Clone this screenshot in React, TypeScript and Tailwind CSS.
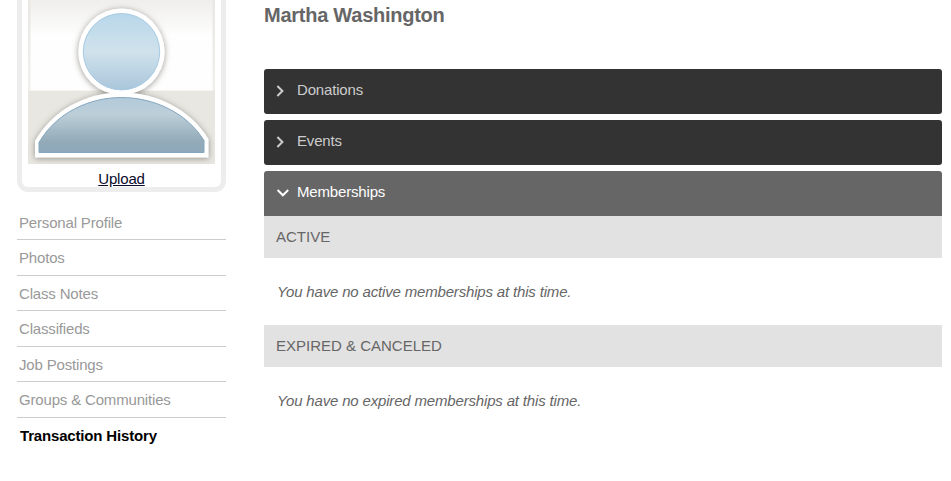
import { useState } from "react";
import clsx from "clsx";

const navItems = [
  "Personal Profile",
  "Photos",
  "Class Notes",
  "Classifieds",
  "Job Postings",
  "Groups & Communities",
  "Transaction History",
];

const sections = [
  { id: "donations", title: "Donations", groups: [] },
  { id: "events", title: "Events", groups: [] },
  {
    id: "memberships",
    title: "Memberships",
    groups: [
      { heading: "ACTIVE", message: "You have no active memberships at this time." },
      { heading: "EXPIRED & CANCELED", message: "You have no expired memberships at this time." },
    ],
  },
];

function Avatar() {
  return (
    <svg viewBox="22 0 199 170" className="block h-[170px] w-[199px]" aria-label="Profile photo">
      <defs>
        <linearGradient id="wall" x1="0" y1="0" x2="0" y2="1">
          <stop offset="0" stopColor="#efeeeb" />
          <stop offset="0.4" stopColor="#fefefe" />
          <stop offset="1" stopColor="#fefefe" />
        </linearGradient>
        <linearGradient id="edge" x1="0" y1="0" x2="0" y2="1">
          <stop offset="0" stopColor="#e8e7e2" />
          <stop offset="1" stopColor="#f1f0ed" />
        </linearGradient>
        <linearGradient id="head" x1="0" y1="0" x2="0" y2="1">
          <stop offset="0" stopColor="#b8d7ea" />
          <stop offset="0.5" stopColor="#d0e2ec" />
          <stop offset="1" stopColor="#a9c6da" />
        </linearGradient>
        <linearGradient id="body" x1="0" y1="0" x2="0" y2="1">
          <stop offset="0" stopColor="#b3cad9" />
          <stop offset="0.3" stopColor="#bccfd9" />
          <stop offset="0.8" stopColor="#93aab8" />
          <stop offset="1" stopColor="#8ea9bb" />
        </linearGradient>
        <filter id="shadow" x="-20%" y="-20%" width="140%" height="140%">
          <feDropShadow dx="0" dy="1" stdDeviation="3" floodColor="#6f6b60" floodOpacity="0.7" />
        </filter>
      </defs>
      <rect x="28" y="0" width="187" height="164" fill="#e8e7e2" />
      <rect x="28" y="0" width="187" height="90.5" fill="url(#edge)" />
      <rect x="30.5" y="0" width="182" height="90.5" fill="url(#wall)" />
      <g filter="url(#shadow)">
        <circle cx="121.5" cy="51.7" r="43.2" fill="#fff" />
        <path d="M35 157.5V141C53 109 87 92.5 121.5 92.5S190 109 208.5 139V157.5Z" fill="#fff" />
      </g>
      <circle cx="121.5" cy="51.7" r="38.2" fill="url(#head)" stroke="#a5c9e2" strokeWidth="1" />
      <path
        d="M39 152.5V142.5C56 113 89 97.5 121.5 97.5S187 113 204 140.5V152.5Z"
        fill="url(#body)"
        stroke="#84a6c0"
        strokeWidth="1"
      />
    </svg>
  );
}

function Chevron({ open }: { open: boolean }) {
  return (
    <svg viewBox="0 0 14 14" className="mt-px h-3.5 w-3.5" fill="none" strokeWidth="2">
      {open ? (
        <path d="M1.6 4L6.9 9.3L12.2 4" stroke="#fff" />
      ) : (
        <path d="M1.4 2L6.4 7L1.4 12" stroke="#ccc" />
      )}
    </svg>
  );
}

export default function App() {
  const [openId, setOpenId] = useState("memberships");

  return (
    <div className="flex h-[481px] w-[951px] overflow-hidden bg-white pl-[17px] font-['Liberation_Sans',Arial,sans-serif] text-[15px] tracking-[-0.17px] text-[#666]">
      {/* Sidebar */}
      <aside className="w-[209px] shrink-0">
        <div className="h-48 rounded-b-[11px] border-5 border-t-0 border-[#ededed] text-center">
          <Avatar />
          <a href="#upload" className="block leading-[18px] text-[#0a0a2a] underline">
            Upload
          </a>
        </div>
        <nav className="mt-[12.7px]">
          {navItems.map((item, i) => {
            const isLast = i === navItems.length - 1;
            return (
              <a
                key={item}
                href="#"
                className={clsx(
                  "block h-[35.5px] leading-[35px]",
                  isLast ? "pl-[3px] font-bold text-black" : "border-b border-[#ccc] pl-0.5 text-[#999]",
                )}
              >
                {item}
              </a>
            );
          })}
        </nav>
      </aside>

      {/* Transaction history */}
      <main className="ml-[38px] w-[678px]">
        <h1 className="h-[69px] pt-0.5 text-xl leading-[26px] font-bold tracking-[-0.25px]">Martha Washington</h1>
        <div className="flex flex-col gap-1.5">
          {sections.map((section) => {
            const open = section.id === openId;
            return (
              <section key={section.id}>
                <button
                  type="button"
                  onClick={() => setOpenId(open ? "" : section.id)}
                  className={clsx(
                    "flex h-[45px] w-full items-center pb-0.5 pl-3",
                    open ? "rounded-t-[3px] bg-[#666] text-white" : "rounded-[3px] bg-[#333] text-[#ccc]",
                  )}
                >
                  <Chevron open={open} />
                  <span className="ml-[7px]">{section.title}</span>
                </button>
                {open &&
                  section.groups.map((group) => (
                    <div key={group.heading}>
                      <h2 className="h-[42px] bg-[#e2e2e2] pl-3 leading-[42px] tracking-normal">{group.heading}</h2>
                      <p className="h-[67px] pl-[13px] leading-[68px] italic">{group.message}</p>
                    </div>
                  ))}
              </section>
            );
          })}
        </div>
      </main>
    </div>
  );
}
